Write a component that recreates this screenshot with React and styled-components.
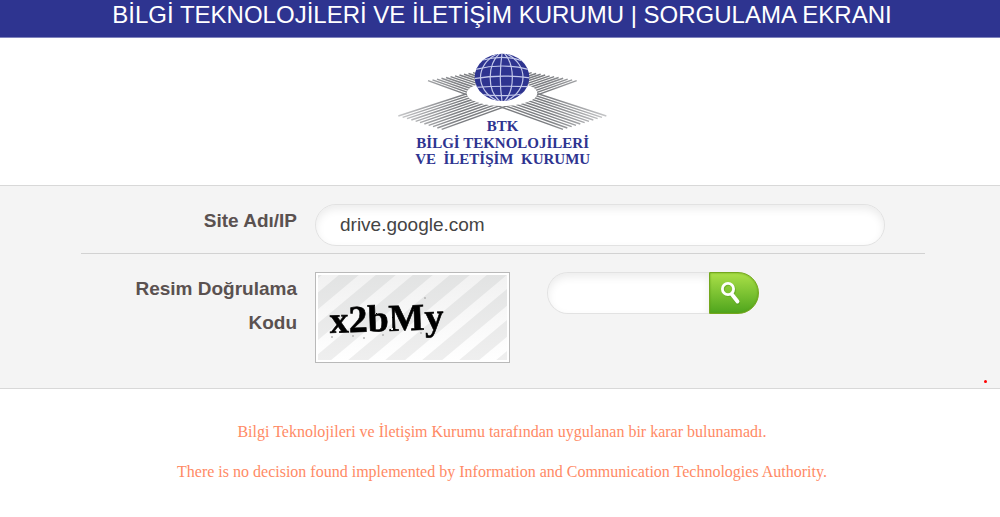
import React, { useState } from "react";
import styled, { createGlobalStyle } from "styled-components";

const RAYS = Array.from({ length: 11 }, (_, i) => i / 10);
const STRIPES = Array.from({ length: 9 }, (_, i) => i * 37 - 48);

const Rays = () => (
  <g stroke="#7b7d81" strokeWidth="4.4">
    {RAYS.map((t) => (
      <line
        key={t}
        x1={250 - 135 * t}
        y1={86 + 24 * t}
        x2={650 - 130 * t}
        y2={216 + 40 * t}
      />
    ))}
  </g>
);

const Logo = () => (
  <LogoSvg viewBox="-8 0 690 390" role="img" aria-label="BTK">
    <defs>
      <clipPath id="globe">
        <ellipse cx="337" cy="100" rx="82" ry="71" />
      </clipPath>
      <linearGradient id="fade" x1="0" x2="1">
        <stop offset="0" stopColor="#fff" stopOpacity="0.6" />
        <stop offset="0.3" stopColor="#fff" stopOpacity="0" />
        <stop offset="0.7" stopColor="#fff" stopOpacity="0" />
        <stop offset="1" stopColor="#fff" stopOpacity="0.6" />
      </linearGradient>
    </defs>
    <Rays />
    <g transform="translate(676 0) scale(-1 1)">
      <Rays />
    </g>
    <rect x="15" y="80" width="650" height="185" fill="url(#fade)" />
    <ellipse cx="337" cy="148" rx="106" ry="38" fill="#fff" />
    <ellipse cx="337" cy="100" rx="82" ry="71" fill="#2e3490" />
    <g
      clipPath="url(#globe)"
      fill="none"
      stroke="#c3c8ea"
      strokeWidth="3.6"
    >
      <path d="M337 28C331 70 331 130 337 172" />
      <path d="M330 28C292 62 292 140 330 172" />
      <path d="M322 30C256 62 256 138 322 170" />
      <path d="M344 28C376 62 376 140 344 172" />
      <path d="M352 30C416 62 416 138 352 170" />
      <path d="M280 48C315 38 360 38 396 50" />
      <path d="M258 76C310 63 365 63 416 76" />
      <path d="M252 104C310 94 365 94 422 102" />
      <path d="M258 130C310 126 365 126 418 128" />
      <path d="M278 152C310 156 365 156 398 150" />
    </g>
    <LogoText x="339" y="260">BTK</LogoText>
    <LogoText x="339" y="311">BİLGİ TEKNOLOJİLERİ</LogoText>
    <LogoText x="339" y="361">VE{"\u00a0 "}İLETİŞİM{"\u00a0 "}KURUMU</LogoText>
  </LogoSvg>
);

const Captcha = () => (
  <CaptchaSvg viewBox="0 0 195 91" role="img" aria-label="Resim">
    <defs>
      <linearGradient id="paper" x1="0" y1="0" x2="0" y2="1">
        <stop offset="0" stopColor="#f1f1f1" />
        <stop offset="1" stopColor="#ffffff" />
      </linearGradient>
      <linearGradient id="stripe" x1="0" y1="0" x2="0" y2="1">
        <stop offset="0" stopColor="#e2e3e3" />
        <stop offset="1" stopColor="#efefef" />
      </linearGradient>
      <clipPath id="frame">
        <rect x="3" y="3" width="189" height="85" />
      </clipPath>
      <filter id="rough" x="-10%" y="-20%" width="120%" height="140%">
        <feTurbulence type="fractalNoise" baseFrequency="0.2" numOctaves="1" seed="4" />
        <feDisplacementMap in="SourceGraphic" scale="2" />
      </filter>
    </defs>
    <rect x="0.5" y="0.5" width="194" height="90" fill="#fff" stroke="#b9b9b9" />
    <rect x="3" y="3" width="189" height="85" fill="url(#paper)" />
    <g clipPath="url(#frame)" fill="url(#stripe)">
      {STRIPES.map((x) => (
        <path key={x} d={`M${x + 36} 2h20l-104 87h-20z`} />
      ))}
    </g>
    <g filter="url(#rough)">
      <CaptchaText x="15" y="61" transform="rotate(-2 15 61)">
        x2bMy
      </CaptchaText>
    </g>
    <g fill="#b5b5b5">
      <circle cx="17" cy="65" r="1" />
      <circle cx="38" cy="64" r="1" />
      <circle cx="49" cy="66" r="1" />
      <circle cx="68" cy="63" r="1" />
      <circle cx="110" cy="26" r="1" />
      <circle cx="106" cy="61" r="1" />
    </g>
  </CaptchaSvg>
);

const App = () => {
  const [site, setSite] = useState("drive.google.com");
  const [code, setCode] = useState("");

  return (
    <Page>
      <GlobalStyle />
      <Header>
        <Title>BİLGİ TEKNOLOJİLERİ VE İLETİŞİM KURUMU | SORGULAMA EKRANI</Title>
      </Header>
      <Brand>
        <Logo />
      </Brand>
      <FormSection>
        <Form onSubmit={(e) => e.preventDefault()}>
          <Row $divided>
            <Label htmlFor="site">Site Adı/IP</Label>
            <Input
              id="site"
              type="text"
              value={site}
              onChange={(e) => setSite(e.target.value)}
            />
          </Row>
          <Row>
            <Label htmlFor="code">Resim Doğrulama Kodu</Label>
            <CodeFields>
              <Captcha />
              <Search>
                <Input
                  id="code"
                  type="text"
                  $joined
                  value={code}
                  onChange={(e) => setCode(e.target.value)}
                />
                <SearchButton type="submit" aria-label="Sorgula">
                  <svg width="22" height="24" viewBox="0 0 22 24" fill="none">
                    <g stroke="#4d8f1c" strokeOpacity="0.4" strokeLinecap="round">
                      <circle cx="9" cy="9" r="5.6" strokeWidth="3" />
                      <path d="M13 15l5 7" strokeWidth="4" />
                    </g>
                    <g stroke="#fff" strokeLinecap="round">
                      <circle cx="8" cy="8" r="5.6" strokeWidth="2.8" />
                      <path d="M12 13.5l5.5 7" strokeWidth="3.8" />
                    </g>
                  </svg>
                </SearchButton>
              </Search>
            </CodeFields>
          </Row>
        </Form>
        <Mark />
      </FormSection>
      <Result>
        <Message>
          Bilgi Teknolojileri ve İletişim Kurumu tarafından uygulanan bir karar
          bulunamadı.
        </Message>
        <Message>
          There is no decision found implemented by Information and
          Communication Technologies Authority.
        </Message>
      </Result>
    </Page>
  );
};

const GlobalStyle = createGlobalStyle`
  * {
    box-sizing: border-box;
  }

  body {
    margin: 0;
    background: #fff;
    font-family: "Liberation Sans", Arial, sans-serif;
  }
`;

const Page = styled.div`
  min-height: 100vh;
`;

const Header = styled.header`
  background: #2e3490;
  border-bottom: 1px solid #7f83bd;
  padding: 0 0 7px 4px;
`;

const Title = styled.h1`
  margin: 0;
  color: #fff;
  font-size: 24px;
  font-weight: normal;
  line-height: 30px;
  text-align: center;
`;

const Brand = styled.div`
  display: flex;
  justify-content: center;
  padding: 6px 0 11px 4px;
`;

const LogoSvg = styled.svg`
  width: 230px;
  height: 130px;
`;

const LogoText = styled.text`
  fill: #2e3490;
  font-family: "Liberation Serif", "Times New Roman", serif;
  font-size: 45px;
  font-weight: bold;
  text-anchor: middle;
`;

const FormSection = styled.section`
  position: relative;
  background: #f4f4f4;
  border-top: 1px solid #d8d8d8;
  border-bottom: 1px solid #d8d8d8;
  padding: 18px 24px 25px 30px;
`;

const Form = styled.form`
  max-width: 844px;
  margin: 0 auto;
`;

const Row = styled.div`
  display: grid;
  grid-template-columns: 216px minmax(0, 570px);
  column-gap: 18px;
  align-items: start;
  padding-bottom: ${({ $divided }) => ($divided ? "7px" : "0")};
  margin-bottom: ${({ $divided }) => ($divided ? "18px" : "0")};
  border-bottom: ${({ $divided }) => ($divided ? "1px solid #d2d2d2" : "none")};
`;

const Label = styled.label`
  color: #5a5150;
  font-size: 19px;
  font-weight: bold;
  line-height: 34px;
  padding-left: 40px;
  text-align: right;
`;

const Input = styled.input`
  width: 100%;
  min-width: 0;
  height: 42px;
  padding: 0 24px;
  border: 1px solid #e2e2e2;
  border-right-width: ${({ $joined }) => ($joined ? "0" : "1px")};
  border-radius: ${({ $joined }) => ($joined ? "21px 0 0 21px" : "21px")};
  background: #fff;
  box-shadow: inset 0 4px 8px rgba(0, 0, 0, 0.08);
  color: #444;
  font-family: inherit;
  font-size: 19px;
  outline: none;
`;

const CodeFields = styled.div`
  display: flex;
  align-items: flex-start;
  gap: 37px;
`;

const CaptchaSvg = styled.svg`
  flex: none;
  width: 195px;
  height: 91px;
`;

const CaptchaText = styled.text`
  fill: #000;
  stroke: #000;
  stroke-width: 0.6px;
  font-family: "Liberation Serif", "Times New Roman", serif;
  font-size: 38px;
  font-weight: bold;
`;

const Search = styled.div`
  display: flex;
  width: 212px;
`;

const SearchButton = styled.button`
  display: flex;
  flex: none;
  align-items: center;
  justify-content: center;
  width: 50px;
  height: 42px;
  padding: 0 6px 0 0;
  border: 1px solid #74a81e;
  border-radius: 0 21px 21px 0;
  background: linear-gradient(#abe048, #4fa51d);
  box-shadow: inset 0 0 2px #5e9c14;
  cursor: pointer;
`;

const Mark = styled.span`
  position: absolute;
  right: 13px;
  bottom: 5px;
  width: 3px;
  height: 3px;
  border-radius: 50%;
  background: #f00;
`;

const Result = styled.section`
  padding: 33px 0 0 4px;
`;

const Message = styled.p`
  margin: 0 0 20px;
  color: #ff8a65;
  font-family: "Liberation Serif", Georgia, serif;
  font-size: 16px;
  line-height: 20px;
  text-align: center;
`;

export default App;
